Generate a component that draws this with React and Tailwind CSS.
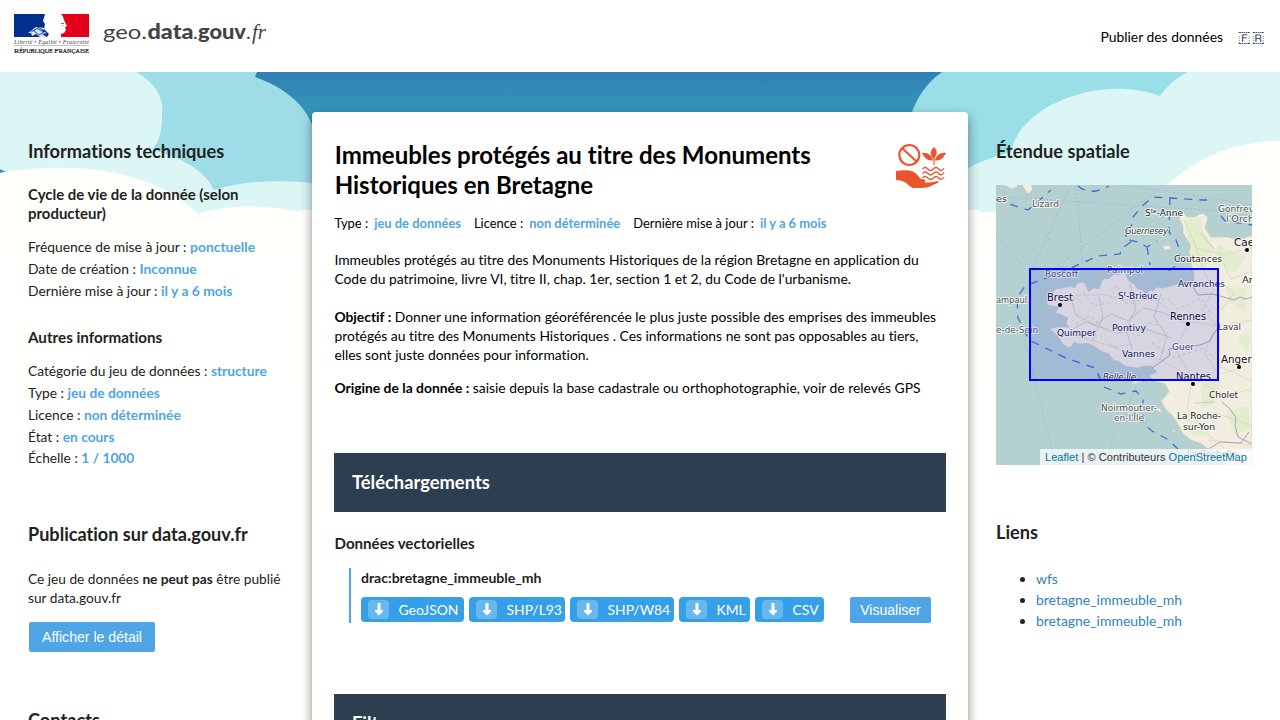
import React from 'react'

const V = ({ children }) => <span className="font-bold text-[#4fa5e4]">{children}</span>

function Logo() {
  return (
    <svg width="260" height="48" viewBox="0 0 260 48" className="block">
      <rect x="0" y="2" width="39" height="23" fill="#002f8f" />
      <rect x="47" y="2" width="28" height="23" fill="#e3001b" />
      <path d="M31 2H47C49 4 49.500 6 50 8L53 14 51 15 52 18 50 21C49 22 46 21.500 45 22L43 25H33L35 22 30 17 31 12 29 9Z" fill="#fff" />
      <path d="M14 21L22 15 31 16 28 19 33 21 28 22 33 25H26L22 22 18 24 17 21Z" fill="#dfe8f5" />
      <path d="M17 20L23 16.500 30 20 25 23 20 19M23 14.500L32 20" fill="none" stroke="#002f8f" strokeWidth=".9" />
      <path d="M47 11.500h3M49 13v1" stroke="#555" strokeWidth=".8" />
      <text x="0" y="32" fontFamily="Liberation Serif, serif" fontStyle="italic" fontSize="6" fill="#444" textLength="75">Liberté • Égalité • Fraternité</text>
      <path d="M0 33.500H75" stroke="#888" strokeWidth=".5" />
      <text x="0" y="41" fontFamily="Liberation Serif, serif" fontSize="5.500" fill="#111" stroke="#111" strokeWidth=".2" textLength="75" lengthAdjust="spacingAndGlyphs"><tspan fontSize="7">R</tspan>ÉPUBLIQUE <tspan fontSize="7">F</tspan>RANÇAISE</text>
      <g fill="#414347" fontFamily="Lato, sans-serif" fontSize="20">
        <text x="89" y="27" textLength="44" lengthAdjust="spacingAndGlyphs">geo.</text>
        <text x="133.500" y="27" fontWeight="900" textLength="46" lengthAdjust="spacingAndGlyphs">data</text>
        <text x="179" y="27">.</text>
        <text x="184" y="27" fontWeight="900" textLength="48" lengthAdjust="spacingAndGlyphs">gouv</text>
        <text x="232" y="27">.</text>
        <text x="238" y="27" fontFamily="Liberation Serif, serif" fontStyle="italic" fontSize="22" textLength="14" lengthAdjust="spacingAndGlyphs">fr</text>
      </g>
    </svg>
  )
}

function Sky() {
  return (
    <svg className="absolute inset-0" width="1280" height="648" viewBox="0 72 1280 648">
      <defs>
        <linearGradient id="sky" x1="0" y1="0" x2="0" y2="1">
          <stop offset="0" stopColor="#3081b4" />
          <stop offset=".28" stopColor="#3595ba" />
        </linearGradient>
      </defs>
      <rect y="72" width="1280" height="150" fill="url(#sky)" />
      <path d="M0 72H257L255 77C284 87 307 106 313 128V240H0Z" fill="#9edde8" />
      <path d="M0 72H136C157 84 164 99 162 114C162 130 160 141 152 150C180 157 204 169 214 190C244 181 281 178 330 185V260H0Z" fill="#dcf6f6" />
      <path d="M0 169L6 172 0 173Z" fill="#3595ba" />
      <path d="M0 173C62 162 150 165 198 214C235 202 278 205 330 219V720H0Z" fill="#fffffc" />
      <path d="M942 72H1280V260H960L911 115C916 99 927 82 942 72Z" fill="#9adee7" />
      <path d="M960 172C978 162 995 156 1011 152C1020 105 1101 74 1160 96C1168 85 1177 77 1188 72H1280V260H960Z" fill="#dcf6f6" />
      <path d="M960 216C1030 202 1100 218 1164 188C1190 162 1230 141 1280 141V720H960Z" fill="#fffffc" />
      <rect y="205" width="1280" height="515" fill="url(#haze)" />
      <rect x="300" y="210" width="680" height="510" fill="#fffffc" />
      <linearGradient id="haze" gradientUnits="userSpaceOnUse" x1="0" y1="220" x2="0" y2="420">
        <stop offset="0" stopColor="#fff" stopOpacity="0" />
        <stop offset="1" stopColor="#fff" />
      </linearGradient>
    </svg>
  )
}

function Pictogram() {
  return (
    <svg width="50" height="46" viewBox="0 0 50 46" fill="none" stroke="#ea552b">
      <circle cx="13.300" cy="12" r="10" strokeWidth="2.200" />
      <path d="M6 5L21 19" strokeWidth="2.200" />
      <g fill="#ea552b" stroke="none">
        <path d="M38 4C34 8 33.500 11 37.500 16.500C41.500 11 42 8 38 4Z" />
        <path d="M26 10C31 9 36 12 37 17.500C31 18 28 14 26 10ZM50 10C45 9 40 12 39 17.500C45 18 48 14 50 10Z" />
        <path d="M0 28C8 27 14 27 18 29C22 32 23 34 25 36C28 36 31 37 28.500 39.500C33 39.500 36 39.500 42 38C44 39 42 40 37 42C32 45 29 45 17 45C11 43 13 38 0 37Z" />
      </g>
      <path d="M38 15V22" strokeWidth="1.200" />
      <path d="M26.500 26q2.700-3 5.400 0t5.400 0 5.400 0 5.400-1M26.500 30.500q2.700-3 5.400 0t5.400 0 5.400 0 5.400-1M26.500 35q2.700-3 5.400 0t5.400 0 5.400 0 5.400-1" strokeWidth="1.300" />
    </svg>
  )
}

const places = [
  ['es', 0, 17, 9.5, '#444', 11], ['Lizard', 36, 22, 9, '#555', 27], ['Gonfrev', 222, 27, 9, '#555', 36], ["l'Orch", 230, 37, 9, '#555', 28],
  ['Coutances', 178, 77, 9.2, '#222', 48], ['Roscoff', 49, 92, 9, '#556', 33], ['Paimpol', 111, 88, 9, '#556', 36], ['Avranches', 182, 102, 9.2, '#223', 47],
  ['Caen', 238, 61, 10.3, '#111', 27], ['Arg', 246, 98, 9.5, '#222', 17],
  ['Brest', 51, 116, 10, '#111', 26], ['Rennes', 174, 135, 10.3, '#111', 36],
  ['ampaul', 0, 118, 9, '#555', 31], ['e-de-Sein', 0, 148, 9, '#555', 42], ['Quimper', 61, 151, 9.2, '#223', 39],
  ['Pontivy', 116, 146, 9.2, '#223', 34], ['Vannes', 126, 172, 9.2, '#223', 33], ['Guer', 176, 165, 9, '#556', 22], ['Laval', 222, 145, 9.2, '#333', 23],
  ['Angers', 225, 178, 10.3, '#111', 36], ['Nantes', 180, 195, 10.3, '#111', 35], ['Cholet', 213, 213, 9.2, '#222', 29],
  ['Noirmoutier-', 105, 226, 9, '#555', 56], ["en-l'Île", 118, 236, 9, '#555', 30],
  ['La Roche-', 181, 234, 9.2, '#222', 44], ['sur-Yon', 187, 245, 9.2, '#222', 32], ['La Rochelle', 191, 272, 9.2, '#333', 50],
]

function SpatialMap() {
  return (
    <div className="relative h-[280px] w-64 overflow-hidden bg-[#b5d0d0]">
      <svg className="block" width="256" height="280" viewBox="0 0 256 280">
        <g fill="none" stroke="#91a9d7" strokeWidth=".8" strokeDasharray="2 2" opacity=".7">
          <path d="M0 0L83 84M75 0L36 84M168 0L66 78 20 110M80 0L87 80M10 12L256 28M27 150L60 280M145 190L110 270M0 50L30 85M130 0L256 20" />
        </g>
        <g fill="#f1eedf" stroke="#c6c9bc" strokeWidth=".6">
          <path d="M51 110L56 108 60 104 67 103 75 101 78 103 82 98 88 97 90 101 93 107 97 103 103 104 105 98 108 93 112 94 118 89 122 90 128 87 131 92 133 96 138 99 142 104 146 105 150 110 154 105 157 106 161 102 167 103 175 101 184 98 190 101 198 99 198 87 195 80 196 73 193 68 195 60 190 53 187 48 187 41 183 33 187 28 192 32 198 32 206 28 212 32 209 43 215 52 232 52 243 55 256 50V280H231L224 273 218 265 211 263 204 258 195 255 187 249 184 243 180 236 175 229 170 225 165 216 169 212 173 207 169 199 158 196 153 190 161 187 155 181 148 181 141 183 129 181 122 176 117 175 113 169 105 166 98 161 91 158 85 159 78 157 76 161 73 163 67 159 59 148 53 144 62 142 73 142 70 138 72 133 64 129 59 128 63 122 51 120Z" />
          <path d="M8 0L16 4 22 1 20-2ZM26 0L32 9 37 4 34-3ZM166 61L174 60 175 64 169 65ZM135 197l8-3 3 2-7 3ZM158 221l6 3 3 5-8-5ZM36 114l5-1M175 244l5 2-2 2Z" />
        </g>
        <g fill="#dcebc6" opacity=".7">
          <path d="M188 35L204 33 207 48 218 62 210 85 199 80ZM222 60L249 72 240 88 218 80ZM228 100L251 104 249 127 235 118ZM205 200L225 192 220 218 206 223ZM230 226L252 221 254 243 238 250ZM186 226L199 230 211 250 197 251ZM241 153L254 149 252 168Z" />
        </g>
        <g fill="none" strokeWidth=".7" opacity=".75">
          <path stroke="#d9cda0" d="M188 35L199 59 208 86 218 105 206 124 222 142 208 167 222 190 245 183M200 63L228 70 256 63M224 71L235 94 256 86M61 120L81 110 109 110 134 116 158 114 190 136 222 141 256 135M70 149L99 156 129 166 163 174 195 192 230 211 256 204M196 194L191 223 213 250 235 270M223 181L256 196M191 235L220 228 256 241M192 139L179 163 196 192M213 255L256 260" />
          <path stroke="#acb6b0" d="M74 111L80 130 99 140 115 129 132 136 147 123 165 127 192 139M103 112L107 132 96 156M134 98L140 123 130 145 136 164M165 109L158 132 171 151 164 175M75 145L90 137 120 148 150 144 176 153M205 48L218 64M238 109L225 125M198 218L218 217" />
          <path stroke="#a6c09c" strokeDasharray="3 3" d="M72 118L88 108 98 121 112 118 121 100 128 118 146 118M80 139L94 131 109 144 122 139 141 151 153 138 170 142M154 115L173 114 182 124 205 113 215 129M156 158L178 173 208 163 219 174M86 151L105 151 117 162 137 160" />
        </g>
        <path d="M197 102L202 110 216 109 224 111 238 115 244 112 250 114 256 112M223 142L216 151 214 156 204 160 190 162 183 163 179 163 173 164 174 170 166 176 156 183M226 217L234 224 240 233 239 240 242 252 256 259M214 263L224 257 245 258 253 247" fill="none" stroke="#b89aba" strokeWidth="1" />
        <g fill="none" stroke="#3c70d4" strokeWidth="1.300" strokeDasharray="8 7">
          <path d="M0 15L32 25 55 5M82 1C90 8 101 8 113 1M134 47L137 32 146 21 157 12 205 15 218 15M174 12L173 47 180 55 184 66 183 79 174 85 153 83M132 44L129 54 142 57 151 62 161 56M151 62L154 80M135 57L126 63 124 69 102 71 84 79 56 91 29 101 21 113 22 133 33 155 70 173 99 183 108 202 125 209 140 206 147 214 147 238 156 246 171 254 182 264M225 31L229 36 256 40" />
        </g>
        <g fontFamily="DejaVu Sans, sans-serif" stroke="#fff" strokeOpacity=".75" strokeWidth="2" paintOrder="stroke" strokeLinejoin="round">
          {places.map(([name, x, y, size, color, width]) => <text key={name} x={x} y={y} fontSize={size} fill={color} textLength={width} lengthAdjust="spacingAndGlyphs">{name}</text>)}
          <text x="149" y="31" fontSize="9" fill="#222">S<tspan dy="-3" fontSize="6">te</tspan><tspan dy="3">-Anne</tspan></text>
          <text x="122" y="114" fontSize="9" fill="#223">S<tspan dy="-3" fontSize="6">t</tspan><tspan dy="3">-Brieuc</tspan></text>
          <text x="129" y="49" fontSize="8.500" fontStyle="italic" fill="#333" textLength="43">Guernesey</text>
          <text x="107" y="195" fontSize="8.500" fontStyle="italic" fill="#333" textLength="33">Belle-Île</text>
        </g>
        <g fill="#000"><circle cx="64" cy="120" r="2" /><circle cx="192" cy="139" r="2" /><circle cx="251" cy="65" r="2" /><circle cx="243" cy="182" r="2" /><circle cx="197" cy="199" r="2" /></g>
        <rect x="34" y="84" width="188" height="111" fill="#00f" fillOpacity=".1" stroke="#00f" strokeWidth="2" />
      </svg>
      <div className="absolute right-0 bottom-0 h-4 w-[212px] whitespace-nowrap bg-white/70 pl-[5px] font-['Liberation_Sans',sans-serif] text-[11px] leading-4 tracking-[0.05px] text-[#333]">
        <span className="text-[#0078a8]">Leaflet</span> | © Contributeurs <span className="text-[#0078a8]">OpenStreetMap</span>
      </div>
    </div>
  )
}

function Download({ label, width }) {
  return (
    <a className={`${width} flex h-[25px] shrink-0 items-center rounded-[4px] bg-[#35a0e8] pl-[7px] text-[13.9px] text-white`}>
      <span className="mr-[9.5px] flex h-[19px] w-[21px] items-center justify-center rounded-[4px] bg-white/25">
        <svg width="8" height="13" viewBox="0 0 8 13"><path d="M2.500 0H5.500V7H8V8.500L4 12.500 0 8.500V7H2.500Z" fill="#fff" /></svg>
      </span>
      {label}
    </a>
  )
}

export default function App() {
  return (
    <div className="flex h-[720px] w-[1280px] flex-col overflow-hidden bg-white font-[Lato,sans-serif] text-[13.87px] leading-[19px] text-[#222] [font-variant-ligatures:none]">
      <header className="flex h-[72px] shrink-0 items-start justify-between pl-[14px] pt-3 pr-4">
        <Logo />
        <nav className="flex gap-[15px] pt-[15px] text-[13.9px] leading-5 text-black">
          <a>Publier des données</a>
          <span className="flex gap-[2px] font-['DejaVu_Sans'] text-[14px] text-[#235]"><span>🇫</span><span>🇷</span></span>
        </nav>
      </header>
      <div className="relative h-[648px]">
        <Sky />
        <div className="relative flex h-full">
          <aside className="w-[312px] shrink-0 pl-7 pt-[68px]">
            <h3 className="text-[18.2px] font-bold leading-[23px]">Informations techniques</h3>
            <h4 className="mt-[22px] w-64 text-[14.95px] font-bold leading-[19px]">Cycle de vie de la donnée (selon producteur)</h4>
            <ul className="mt-[13px] leading-[21.76px]">
              <li>Fréquence de mise à jour : <V>ponctuelle</V></li>
              <li>Date de création : <V>Inconnue</V></li>
              <li>Dernière mise à jour : <V>il y a 6 mois</V></li>
            </ul>
            <h4 className="mt-[27px] text-[15.2px] font-bold leading-[19px]">Autres informations</h4>
            <ul className="mt-[13px] text-[13.75px] leading-[21.76px]">
              <li>Catégorie du jeu de données : <V>structure</V></li>
              <li>Type : <V>jeu de données</V></li>
              <li>Licence : <V>non déterminée</V></li>
              <li>État : <V>en cours</V></li>
              <li>Échelle : <V>1 / 1000</V></li>
            </ul>
            <h3 className="mt-[54px] text-[18.1px] font-bold leading-[23px]">Publication sur data.gouv.fr</h3>
            <p className="mt-[23px] w-[260px] text-[13.7px]">Ce jeu de données <b>ne peut pas</b> être publié<br />sur data.gouv.fr</p>
            <button className="mt-[15px] ml-px block h-[30px] w-[126px] rounded-[2px] bg-[#4fa5e6] font-['Liberation_Sans',sans-serif] text-[14.1px] text-white">Afficher le détail</button>
            <h3 className="mt-[57px] text-[18.2px] font-bold leading-[23px]">Contacts</h3>
          </aside>
          <main className="mt-10 h-[700px] w-[656px] shrink-0 rounded-[4px] bg-white px-[22px] pt-[28px] text-black shadow-[0_5px_12px_rgba(0,0,0,0.45)]">
            <div className="flex justify-between pl-[0.7px]">
              <h1 className="w-[520px] text-[24.03px] font-bold leading-[30px]">Immeubles protégés au titre des Monuments Historiques en Bretagne</h1>
              <div className="mt-[3px]"><Pictogram /></div>
            </div>
            <div className="mt-[14px] flex gap-[13px] pl-[0.4px] text-[12.93px]">
              <span className="flex gap-[6px]">Type : <V>jeu de données</V></span>
              <span className="flex gap-[6px]">Licence : <V>non déterminée</V></span>
              <span className="flex gap-[6px]">Dernière mise à jour : <V>il y a 6 mois</V></span>
            </div>
            <div className="mt-[17px] pl-[0.4px]">
              <p>Immeubles protégés au titre des Monuments Historiques de la région Bretagne en application du<br />Code du patrimoine, livre VI, titre II, chap. 1er, section 1 et 2, du Code de l'urbanisme.</p>
              <p className="mt-[19px]"><b>Objectif :</b> Donner une information géoréférencée le plus juste possible des emprises des immeubles<br />protégés au titre des Monuments Historiques . Ces informations ne sont pas opposables au tiers,<br />elles sont juste données pour information.</p>
              <p className="mt-[14px]"><b>Origine de la donnée :</b> saisie depuis la base cadastrale ou orthophotographie, voir de relevés GPS</p>
            </div>
            <h2 className="mt-[56px] h-[59px] bg-[#2c3e50] pl-[18px] text-[18.35px] font-bold leading-[58px] text-white">Téléchargements</h2>
            <h4 className="mt-[22px] pl-[0.5px] text-[15.1px] font-bold leading-[19px] text-[#222]">Données vectorielles</h4>
            <section className="mt-[15px] ml-[15px] mr-[15px] h-[55px] border-l-2 border-[#4fa5e6] pl-[10px]">
              <h5 className="text-[14.05px] font-bold leading-[20px] text-[#222]">drac:bretagne_immeuble_mh</h5>
              <div className="mt-[9px] flex items-start gap-[5px]">
                <Download label="GeoJSON" width="w-[103px]" />
                <Download label="SHP/L93" width="w-[96px]" />
                <Download label="SHP/W84" width="w-[104px]" />
                <Download label="KML" width="w-[71px]" />
                <Download label="CSV" width="w-[69px]" />
                <button className="ml-auto h-[26px] w-[81px] rounded-[2px] bg-[#4fa5e6] font-['Liberation_Sans',sans-serif] text-[14px] text-white">Visualiser</button>
              </div>
            </section>
            <h2 className="mt-[71px] h-[59px] bg-[#2c3e50] pl-[18px] text-[18.35px] font-bold leading-[58px] text-white">Filtres</h2>
          </main>
          <aside className="w-[312px] pl-7 pt-[68px]">
            <h3 className="mb-[22px] text-[18.2px] font-bold leading-[23px]">Étendue spatiale</h3>
            <SpatialMap />
            <h3 className="mt-[56px] text-[18.2px] font-bold leading-[23px]">Liens</h3>
            <ul className="mt-[24px] list-disc pl-10 text-[13.95px] leading-[21px]">
              <li><a className="text-[#3182bd]">wfs</a></li>
              <li><a className="text-[#3182bd]">bretagne_immeuble_mh</a></li>
              <li><a className="text-[#3182bd]">bretagne_immeuble_mh</a></li>
            </ul>
          </aside>
        </div>
      </div>
    </div>
  )
}
